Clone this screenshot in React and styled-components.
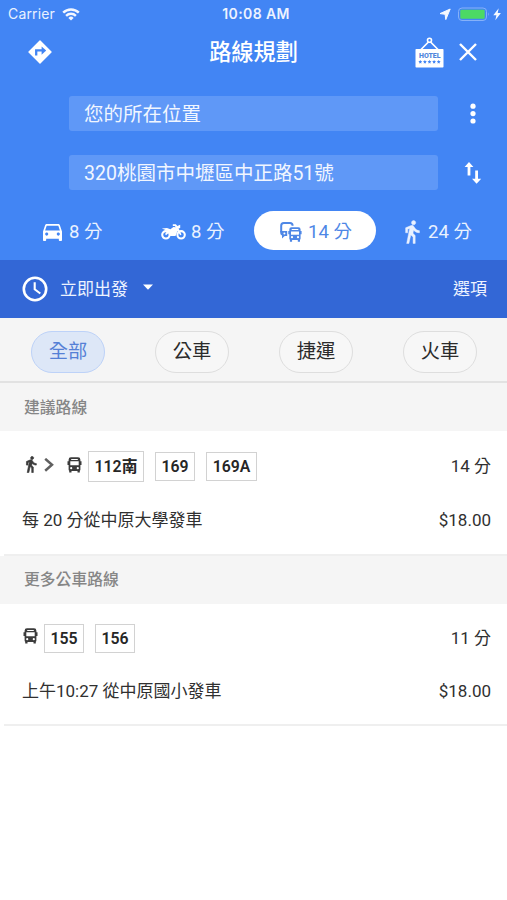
import React from "react";
import styled, { createGlobalStyle } from "styled-components";

const Global = createGlobalStyle`
  * { box-sizing: border-box; }
  body {
    margin: 0;
    background: #fff;
    font-family: Roboto, "Noto Sans CJK TC", sans-serif;
    color: #303030;
  }
  svg { display: block; flex: none; }
`;

const Screen = styled.div`
  width: 507px;
  height: 900px;
  overflow: hidden;
  display: flex;
  flex-direction: column;
  background: #fff;
`;

const Header = styled.header`
  height: 260px;
  flex: none;
  background: #4285f4;
  color: #fff;
`;

const StatusBar = styled.div`
  height: 28px;
  display: grid;
  grid-template-columns: 1fr auto 1fr;
  align-items: center;
  padding: 0 5px 0 8px;
  font-family: Inter, sans-serif;
  font-size: 14px;
  line-height: 28px;
`;

const StatusGroup = styled.div`
  display: flex;
  align-items: center;
  justify-content: ${(p) => (p.$end ? "flex-end" : "flex-start")};
  gap: ${(p) => (p.$end ? 0 : 7)}px;
  letter-spacing: 0.15px;
  color: #e9f1ff;
`;

const Clock = styled.div`
  padding-left: 2px;
  font-weight: 600;
  font-size: 14px;
  letter-spacing: 0.4px;
  color: #edf3ff;
`;

const TitleBar = styled.div`
  height: 48px;
  display: grid;
  grid-template-columns: 80px 1fr 80px;
  grid-template-rows: 48px;
  align-items: center;
`;

const TitleIcon = styled.div`
  padding-left: 28px;
`;

const Title = styled.h1`
  margin: 0;
  padding-top: 1px;
  font-size: 22.2px;
  font-weight: 500;
  line-height: 47px;
  text-align: center;
`;

const TitleActions = styled.div`
  display: flex;
  align-items: center;
  justify-content: flex-end;
  gap: 15px;
  padding-right: 30px;
`;

const Fields = styled.div`
  display: grid;
  grid-template-columns: 369px 69px;
  row-gap: 24px;
  padding: 20px 0 0 69px;
`;

const Field = styled.div`
  height: 35px;
  padding-left: 15px;
  border-radius: 3px;
  background: #5f98f7;
  color: #f1f6ff;
  font-size: 19.5px;
  line-height: 37px;
`;

const FieldAction = styled.div`
  display: flex;
  align-items: center;
  justify-content: center;
`;

const Modes = styled.nav`
  display: grid;
  grid-template-columns: 118px 93px 122px 1fr;
  padding: 21px 0 0 43px;
`;

const Mode = styled.div`
  height: 39px;
  display: flex;
  align-items: center;
  gap: ${(p) => p.$gap}px;
  padding: 3px 0 0 ${(p) => p.$inset || 0}px;
  border-radius: 20px;
  background: ${(p) => (p.$active ? "#fff" : "transparent")};
  color: ${(p) => (p.$active ? "#4e87e6" : "#eaf2ff")};
  font-size: 18.5px;
  line-height: 36px;
  white-space: nowrap;
`;

const DepartBar = styled.div`
  height: 58px;
  flex: none;
  display: flex;
  align-items: center;
  padding: 0 20px 0 22px;
  background: #3367d6;
  color: #edf3ff;
  font-size: 17px;
  line-height: 58px;
`;

const DepartLabel = styled.span`
  margin: 0 15px 0 12px;
`;

const Options = styled.span`
  margin-left: auto;
`;

const Filters = styled.div`
  height: 65px;
  flex: none;
  display: flex;
  justify-content: space-between;
  padding: 12.5px 30px 0 31px;
  background: #f5f5f5;
  border-bottom: 2px solid #e2e2e2;
`;

const Chip = styled.div`
  width: 74px;
  height: 42px;
  border: 1.5px solid ${(p) => (p.$active ? "#bdd2f8" : "#dedede")};
  border-radius: 21px;
  background: ${(p) => (p.$active ? "#dde7f7" : "#f7f7f7")};
  color: ${(p) => (p.$active ? "#5580d6" : "#2b2b2b")};
  font-size: 19.3px;
  line-height: 40px;
  text-align: center;
`;

const SectionTitle = styled.h2`
  margin: 0;
  height: 48px;
  flex: none;
  padding-left: 24px;
  background: #f5f5f5;
  color: #868686;
  font-size: 15.8px;
  font-weight: 500;
  line-height: ${(p) => (p.$raised ? 48 : 50)}px;
`;

const Card = styled.section`
  height: ${(p) => p.$height}px;
  flex: none;
  padding: ${(p) => p.$top}px 16px 0 22px;
`;

const Divider = styled.div`
  height: 2px;
  flex: none;
  margin-left: 4px;
  background: #efefef;
`;

const Row = styled.div`
  display: flex;
  justify-content: space-between;
  align-items: center;
  height: ${(p) => p.$height}px;
  font-size: 17px;
  line-height: ${(p) => p.$height}px;
`;

const Legs = styled.div`
  display: flex;
  align-items: center;
  color: #3b3b3b;
`;

const LegIcon = styled.span`
  padding-bottom: 4px;
  margin: 0 ${(p) => p.$after || 0}px 0 ${(p) => p.$before || 0}px;
`;

const Badge = styled.span`
  height: ${(p) => (p.$tall ? 31 : 29)}px;
  width: ${(p) => p.$width}px;
  margin-right: 11px;
  border: 1.5px solid #d2d2d2;
  color: #262626;
  font-size: 15.8px;
  font-weight: 600;
  line-height: ${(p) => (p.$tall ? 29 : 27)}px;
  text-align: center;
`;

const Wifi = () => (
  <svg width="18" height="13" viewBox="0 0 18 13" fill="none" stroke="#f3f7ff" strokeWidth="2.4">
    <path d="M1.2 4.7a11 11 0 0 1 15.6 0" />
    <path d="M4.1 7.8a7 7 0 0 1 9.8 0" />
    <path d="M9 12.6 6.4 9.9a3.7 3.7 0 0 1 5.2 0z" fill="#f3f7ff" stroke="none" />
  </svg>
);

const Power = () => (
  <svg width="63" height="16" viewBox="0 0 63 16">
    <path
      d="M1 7.6 11.2 3 6.8 13.6 6.1 8.3z"
      fill="#f5f9ff" stroke="#f5f9ff" strokeWidth="1" strokeLinejoin="round"
    />
    <rect x="19.5" y="2" width="28" height="12.5" rx="3.5" fill="none" stroke="#86b1f9" />
    <rect x="21.3" y="3.8" width="24.4" height="9" rx="1.2" fill="#4cd964" />
    <path d="M49 6.2q1.8 2 0 4z" fill="#86b1f9" />
    <path d="M59.7 2.2 54.3 9.2h3.1l-1.1 5 5.6-7.2h-3.2z" fill="#f5f9ff" />
  </svg>
);

const Directions = () => (
  <svg width="24" height="24" viewBox="0 0 24 24">
    <path
      d="M12 1 23 12 12 23 1 12z"
      fill="#fff" stroke="#fff" strokeWidth="1.4" strokeLinejoin="round"
    />
    <path d="M8.2 15.6v-5.2h6" fill="none" stroke="#4285f4" strokeWidth="2.3" />
    <path d="M13.6 6.4 18.2 10.6 13.6 14.8z" fill="#4285f4" />
  </svg>
);

const Hotel = () => (
  <svg width="29" height="32" viewBox="0 0 29 32">
    <path d="M5.5 14 14.5 5 23.5 14" fill="none" stroke="#fff" strokeWidth="1.6" />
    <circle cx="14.5" cy="4.3" r="2" fill="#4285f4" stroke="#fff" strokeWidth="1.6" />
    <rect x="0.5" y="13" width="28" height="18.5" rx="0.8" fill="#fff" />
    <text
      x="4" y="21.9" textLength="21.5" lengthAdjust="spacingAndGlyphs"
      fontFamily="Roboto, sans-serif" fontSize="6.8" fontWeight="900" fill="#4f86dc"
    >
      HOTEL
    </text>
    {[5.3, 9.9, 14.5, 19.1, 23.7].map((x) => (
      <path key={x} d={`M${x} 23.9l.6 1.2 1.3.2-1 .9.3 1.3-1.2-.6-1.2.6.3-1.3-1-.9 1.3-.2z`} fill="#4285f4" />
    ))}
  </svg>
);

const Close = () => (
  <svg width="18" height="18" viewBox="0 0 18 18" stroke="#fff" strokeWidth="2.4">
    <path d="M1 1l16 16M17 1 1 17" />
  </svg>
);

const More = () => (
  <svg width="6" height="22" viewBox="0 0 6 22" fill="#fff">
    <circle cx="3" cy="3.2" r="2.6" />
    <circle cx="3" cy="10.6" r="2.6" />
    <circle cx="3" cy="18" r="2.6" />
  </svg>
);

const Swap = () => (
  <svg width="18" height="22" viewBox="0 0 18 22" fill="#fff">
    <path d="M5 0 9.4 5H6.4v8.6H3.6V5H.6z" />
    <path d="M12.6 21.8 8 16.8h3.2V8.4H14v8.4h3.2z" />
  </svg>
);

const Car = () => (
  <svg width="19" height="17" viewBox="3 4 18 16" fill="#fff">
    <path
      fillRule="evenodd"
      d="M18.92 5.01C18.72 4.42 18.16 4 17.5 4h-11c-.66 0-1.21.42-1.42 1.01L3 11v8c0 .55.45 1 1 1h1c.55 0 1-.45 1-1v-1h12v1c0 .55.45 1 1 1h1c.55 0 1-.45 1-1v-8l-2.08-5.99zM6.5 15C5.67 15 5 14.33 5 13.5S5.67 12 6.5 12 8 12.67 8 13.5 7.33 15 6.5 15zm11 0c-.83 0-1.5-.67-1.5-1.5s.67-1.5 1.5-1.5 1.5.67 1.5 1.5-.67 1.5-1.5 1.5zM5 10l1.5-4.5h11L19 10H5z"
    />
  </svg>
);

const Walk = ({ width, height, weight }) => (
  <svg
    width={width} height={height} viewBox="4.8 1 14.4 22.5"
    fill="currentColor" stroke="currentColor" strokeWidth={weight}
  >
    <path d="M13.5 5.5c1.1 0 2-.9 2-2s-.9-2-2-2-2 .9-2 2 .9 2 2 2zM9.8 8.9L7 23h2.1l1.8-8 2.1 2v6h2v-7.5l-2.1-2 .6-3C14.8 12 16.8 13 19 13v-2c-1.9 0-3.5-1-4.3-2.4l-1-1.6c-.4-.6-1-1-1.7-1-.3 0-.5.1-.8.1L6 8.3V13h2V9.6l1.8-.7" />
  </svg>
);

const Bus = () => (
  <svg width="15" height="16" viewBox="0 0 15 16" fill="currentColor">
    <path
      fillRule="evenodd"
      d="M4 .3h7q2.4 0 2.4 2.4v1.6h1.1v3.6h-1.1v4.6q0 .8-.6 1.2v1.9h-2.3v-1.7H4.5v1.7H2.2v-1.9q-.6-.4-.6-1.2V7.9H.5V4.3h1.1V2.7Q1.6.3 4 .3zM4.2 1.9v1h6.6v-1zM3.3 4.3v4h8.4v-4zM4.2 10.1a1.1 1.1 0 1 0 0 2.2 1.1 1.1 0 0 0 0-2.2zM10.8 10.1a1.1 1.1 0 1 0 0 2.2 1.1 1.1 0 0 0 0-2.2z"
    />
  </svg>
);

const Motorcycle = () => (
  <svg width="25" height="16" viewBox="0 0 25 16" fill="none" stroke="#fff" strokeWidth="2.1">
    <circle cx="4.9" cy="10.8" r="3.7" />
    <circle cx="20.1" cy="10.8" r="3.7" />
    <path
      d="M0.8 4.4 6 4l3.4 1.2 3-2.1 2.3.2-.9-1.4h-2V.3h3.1l1.4 1.6L19.2.7v3.2l-1.6.5 2.9 6-1.3.9-2.7-4.4-2 5H9.2L8.3 8.6 5 11.2l-.9-1.1 2.3-3.3L4.5 5.9z"
      fill="#fff" stroke="none"
    />
  </svg>
);

const Transit = () => (
  <svg width="22" height="20" viewBox="0 0 22 20" fill="none" stroke="currentColor">
    <path d="M1.2 10V3.8Q1.2 1.1 3.8 1.1h6.2q2.6 0 2.6 2.7" strokeWidth="2" />
    <path d="M.2 9h7v4.9H4.7L2 16.6v-3.1q-1.8-.6-1.8-2.5z" fill="currentColor" stroke="none" />
    <circle cx="4.4" cy="11.4" r="1" fill="#fff" stroke="none" />
    <path
      d="M11.4 5.3h7q2.2 0 2.2 2.2v1.4h1v3.4h-1v4.1q0 .9-.6 1.3v2.1h-2.2V18h-5.7v1.8H9.9v-2.1q-.6-.4-.6-1.3v-4.1h-1V8.9h1V7.5q0-2.2 2.1-2.2zM11.7 7v.9h6.6V7zM11 9.4v3.3h8V9.4zM12 14.1a1.1 1.1 0 1 0 0 2.2 1.1 1.1 0 0 0 0-2.2zM18 14.1a1.1 1.1 0 1 0 0 2.2 1.1 1.1 0 0 0 0-2.2z"
      fill="currentColor" fillRule="evenodd" stroke="none"
    />
  </svg>
);

const ClockIcon = () => (
  <svg width="26" height="26" viewBox="0 0 26 26" fill="none" stroke="#fff" strokeWidth="2.6">
    <circle cx="13" cy="13" r="11.2" />
    <path d="M12.7 6.3v7l5.6 4.2" strokeWidth="2.1" />
  </svg>
);

const Caret = () => (
  <svg width="10" height="10" viewBox="0 0 10 10" fill="#fff">
    <path d="M0 .6h10L5 5.8z" />
  </svg>
);

const Chevron = () => (
  <svg width="10" height="14" viewBox="0 0 10 14" fill="none" stroke="#606060" strokeWidth="2.5">
    <path d="M1.2 .8 8 6.8l-6.8 6" />
  </svg>
);

const FILTERS = ["全部", "公車", "捷運", "火車"];

export default function App() {
  return (
    <Screen>
      <Global />
      <Header>
        <StatusBar>
          <StatusGroup>
            Carrier <Wifi />
          </StatusGroup>
          <Clock>10:08 AM</Clock>
          <StatusGroup $end>
            <Power />
          </StatusGroup>
        </StatusBar>
        <TitleBar>
          <TitleIcon>
            <Directions />
          </TitleIcon>
          <Title>路線規劃</Title>
          <TitleActions>
            <Hotel />
            <Close />
          </TitleActions>
        </TitleBar>
        <Fields>
          <Field>您的所在位置</Field>
          <FieldAction>
            <More />
          </FieldAction>
          <Field>320桃園市中壢區中正路51號</Field>
          <FieldAction>
            <Swap />
          </FieldAction>
        </Fields>
        <Modes>
          <Mode $gap={7}>
            <Car />8 分
          </Mode>
          <Mode $gap={5}>
            <Motorcycle />8 分
          </Mode>
          <Mode $active $gap={6} $inset={26}>
            <Transit />14 分
          </Mode>
          <Mode $gap={8} $inset={28}>
            <Walk width={16} height={24} weight={0.4} />24 分
          </Mode>
        </Modes>
      </Header>
      <DepartBar>
        <ClockIcon />
        <DepartLabel>立即出發</DepartLabel>
        <Caret />
        <Options>選項</Options>
      </DepartBar>
      <Filters>
        {FILTERS.map((name, i) => (
          <Chip key={name} $active={i === 0}>
            {name}
          </Chip>
        ))}
      </Filters>
      <SectionTitle>建議路線</SectionTitle>
      <Card $height={123} $top={20}>
        <Row $height={31}>
          <Legs>
            <LegIcon $before={3} $after={7}>
              <Walk width={12} height={17} weight={0.9} />
            </LegIcon>
            <LegIcon $after={13}>
              <Chevron />
            </LegIcon>
            <LegIcon $after={6}>
              <Bus />
            </LegIcon>
            <Badge $tall $width={56}>112南</Badge>
            <Badge $width={40}>169</Badge>
            <Badge $width={51}>169A</Badge>
          </Legs>
          <span>14 分</span>
        </Row>
        <Row $height={77}>
          <span>每 20 分從中原大學發車</span>
          <span>$18.00</span>
        </Row>
      </Card>
      <Divider />
      <SectionTitle $raised>更多公車路線</SectionTitle>
      <Card $height={120} $top={19}>
        <Row $height={30}>
          <Legs>
            <LegIcon $before={1} $after={6}>
              <Bus />
            </LegIcon>
            <Badge $width={40}>155</Badge>
            <Badge $width={40}>156</Badge>
          </Legs>
          <span>11 分</span>
        </Row>
        <Row $height={76}>
          <span>上午10:27 從中原國小發車</span>
          <span>$18.00</span>
        </Row>
      </Card>
      <Divider />
    </Screen>
  );
}
